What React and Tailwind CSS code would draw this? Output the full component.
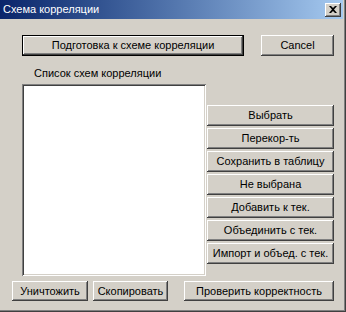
import React from 'react';

const raised =
  'bg-[#d4d0c8] shadow-[inset_-1px_-1px_#404040,inset_1px_1px_#ffffff,inset_-2px_-2px_#808080,inset_2px_2px_#d4d0c8]';

const WinButton = ({ className = '', children, isDefault = false }) => {
  if (isDefault) {
    return (
      <div className={`border border-black ${className}`}>
        <div className={`${raised} h-full w-full flex items-center justify-center text-[11px] text-black`}>
          {children}
        </div>
      </div>
    );
  }
  return (
    <div className={`${raised} flex items-center justify-center text-[11px] text-black ${className}`}>
      {children}
    </div>
  );
};

const sideButtons = [
  'Выбрать',
  'Перекор-ть',
  'Сохранить в таблицу',
  'Не выбрана',
  'Добавить к тек.',
  'Объединить с тек.',
  'Импорт и объед. с тек.',
];

const App = () => {
  return (
    <div
      className="w-[346px] h-[312px] bg-[#d4d0c8] overflow-hidden flex flex-col shadow-[inset_-1px_-1px_#404040,inset_-2px_-2px_#808080]"
      style={{ fontFamily: '"Liberation Sans", Arial, sans-serif' }}
    >
      {/* Title bar */}
      <div className="h-[19px] w-[343px] flex items-center justify-between bg-gradient-to-r from-[#0a246a] to-[#a6caf0]">
        <span className="pl-[3px] text-[11px] text-white">Схема корреляции</span>
        <div className={`${raised} w-[16px] h-[14px] mr-[2px] flex items-center justify-center`}>
          <svg width="8" height="7" viewBox="0 0 8 7">
            <path d="M0 0h2l2 2 2-2h2L5 3.5 8 7H6L4 5 2 7H0l3-3.5z" fill="#000" />
          </svg>
        </div>
      </div>

      {/* Top buttons */}
      <div className="flex mt-[16px] ml-[22px] h-[21px]">
        <WinButton isDefault className="w-[222px] h-[21px]">Подготовка к схеме корреляции</WinButton>
        <WinButton className="w-[73px] h-[21px] ml-[17px]">Cancel</WinButton>
      </div>

      {/* Label */}
      <div className="ml-[34px] mt-[11px] h-[17px] text-[11px] text-black leading-[13px]">
        Список схем корреляции
      </div>

      {/* List + side buttons */}
      <div className="flex ml-[22px] h-[192px]">
        <div className="w-[184px] h-[192px] bg-white shadow-[inset_1px_1px_#808080,inset_-1px_-1px_#ffffff,inset_2px_2px_#404040,inset_-2px_-2px_#d4d0c8]" />
        <div className="ml-[1px] pt-[21px] flex flex-col gap-[2px]">
          {sideButtons.map((label) => (
            <WinButton key={label} className="w-[127px] h-[21px]">
              {label}
            </WinButton>
          ))}
        </div>
      </div>

      {/* Bottom buttons */}
      <div className="flex mt-[5px] ml-[12px] h-[20px]">
        <WinButton className="w-[76px] h-[20px]">Уничтожить</WinButton>
        <WinButton className="w-[75px] h-[20px] ml-[5px]">Скопировать</WinButton>
        <WinButton className="w-[150px] h-[20px] ml-[16px]">Проверить корректность</WinButton>
      </div>
    </div>
  );
};

export default App;
